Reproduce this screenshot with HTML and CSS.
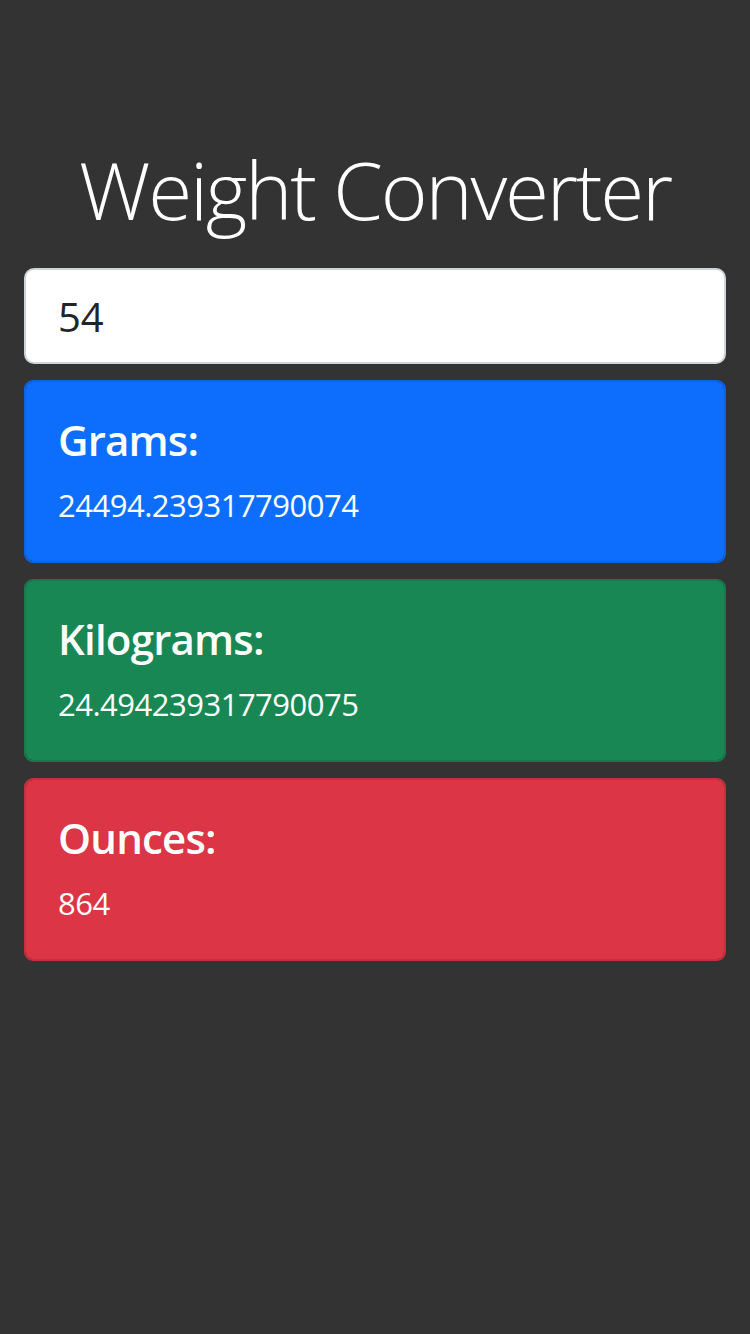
FILE: index.html
```html
<!DOCTYPE html>
<html lang="en">
<head>
<meta charset="utf-8">
<title>Weight Converter</title>
<link rel="stylesheet" href="styles.css">
</head>
<body>
<main class="container">
  <h1 class="title">Weight Converter</h1>
  <input class="weight-input" type="number" value="54">
  <section class="card card-blue">
    <h4 class="card-title">Grams:</h4>
    <p class="card-value">24494.239317790074</p>
  </section>
  <section class="card card-green">
    <h4 class="card-title">Kilograms:</h4>
    <p class="card-value">24.494239317790075</p>
  </section>
  <section class="card card-red">
    <h4 class="card-title">Ounces:</h4>
    <p class="card-value">864</p>
  </section>
</main>
</body>
</html>
```

FILE: styles.css
```css
* { box-sizing: border-box; }
html, body {
  margin: 0;
  padding: 0;
  background: #333333;
  font-family: "Open Sans", "Noto Sans", sans-serif;
  color: #fff;
}
.container {
  padding: 141px 24px 0;
  display: flex;
  flex-direction: column;
}
.title {
  margin: 0 0 31px;
  font-size: 80px;
  line-height: 96px;
  font-weight: 300;
  text-align: center;
  letter-spacing: -2.2px;
}
.weight-input {
  display: block;
  width: 100%;
  height: 96px;
  padding: 16px 32px;
  font-family: inherit;
  font-size: 40px;
  color: #212529;
  background: #fff;
  border: 2px solid #ced4da;
  border-radius: 10px;
  outline: none;
  -moz-appearance: textfield;
}
.weight-input::-webkit-outer-spin-button,
.weight-input::-webkit-inner-spin-button { -webkit-appearance: none; margin: 0; }
.card {
  margin-top: 16px;
  padding: 32px;
  border: 2px solid rgba(0,0,0,0.125);
  border-radius: 9px;
  background-clip: padding-box;
}
.card-blue { background-color: #0d6efd; border-color: #0c63e4; }
.card-green { background-color: #198754; border-color: #177a4c; }
.card-red { background-color: #dc3545; border-color: #c6303e; }
.card-title {
  margin: 0 0 16px;
  font-size: 42px;
  line-height: 51px;
  font-weight: 600;
  letter-spacing: -0.8px;
}
.card-value {
  margin: 0;
  font-size: 31px;
  line-height: 48px;
  letter-spacing: -0.5px;
}
```
